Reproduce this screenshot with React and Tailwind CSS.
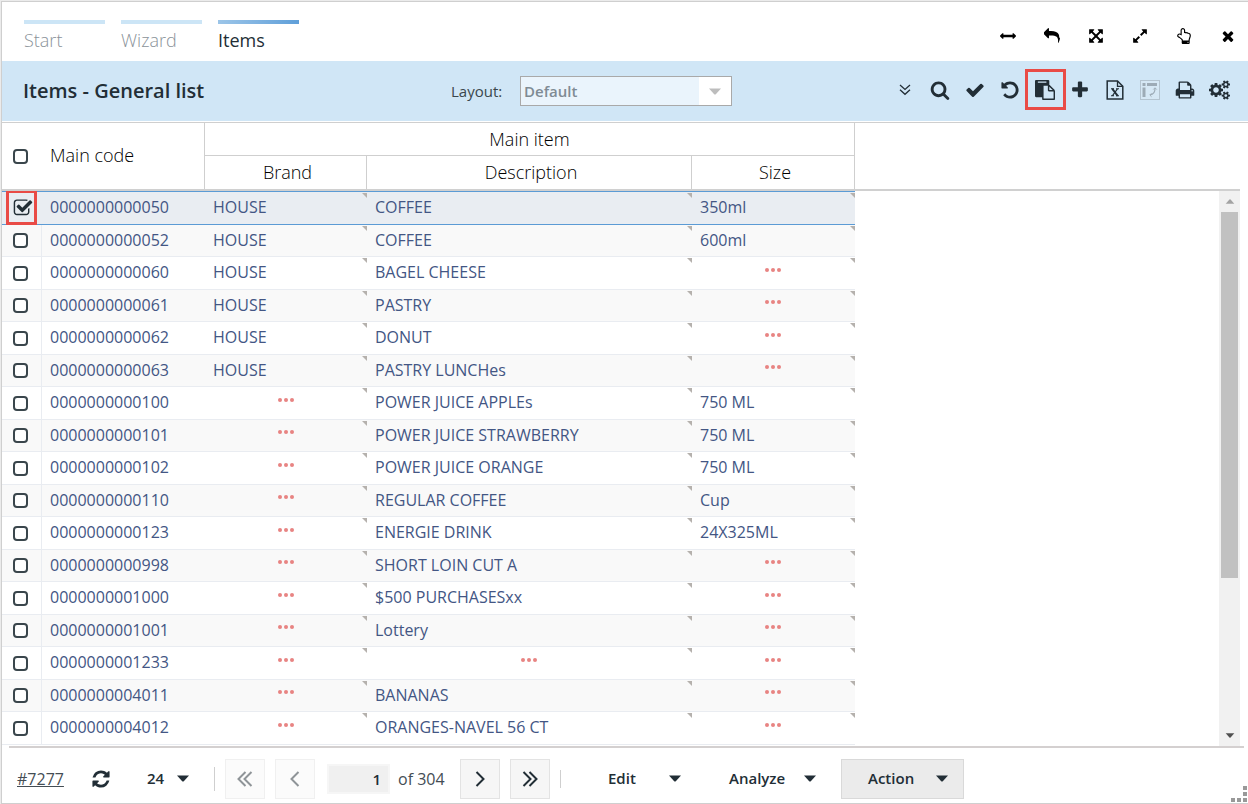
import { useState } from "react";

const PATHS = {
  width:
    "M1792 896q0 26-19 45l-256 256q-19 19-45 19t-45-19-19-45v-128h-1024v128q0 26-19 45t-45 19-45-19l-256-256q-19-19-19-45t19-45l256-256q19-19 45-19t45 19 19 45v128h1024v-128q0-26 19-45t45-19 45 19l256 256q19 19 19 45z",
  reply:
    "M1792 1120q0 166-127 451-3 7-10.5 24t-13.5 30-13 22q-12 17-28 17-15 0-23.5-10t-8.5-25q0-9 2.5-26.5t2.5-23.5q5-68 5-123 0-112-19.5-200.5t-54-153.5-89.5-112-118-77.5-147-46-172.5-22.5-197.5-6h-224v256q0 26-19 45t-45 19-45-19l-512-512q-19-19-19-45t19-45l512-512q19-19 45-19t45 19 19 45v256h224q713 0 875 403 53 134 53 333z",
  arrows:
    "M1411 541l-355 355 355 355 144-144q29-31 70-14 39 17 39 59v448q0 26-19 45t-45 19h-448q-42 0-59-40-17-39 14-69l144-144-355-355-355 355 144 144q31 30 14 69-17 40-59 40h-448q-26 0-45-19t-19-45v-448q0-42 40-59 39-17 69 14l144 144 355-355-355-355-144 144q-19 19-45 19-12 0-24-5-40-17-40-59v-448q0-26 19-45t45-19h448q42 0 59 40 17 39-14 69l-144 144 355 355 355-355-144-144q-31-30-14-69 17-40 59-40h448q26 0 45 19t19 45v448q0 42-39 59-13 5-25 5-26 0-45-19z",
  expand:
    "M883 1056q0 13-10 23l-332 332 144 144q19 19 19 45t-19 45-45 19h-448q-26 0-45-19t-19-45v-448q0-26 19-45t45-19 45 19l144 144 332-332q10-10 23-10t23 10l114 114q10 10 10 23zm781-864v448q0 26-19 45t-45 19-45-19l-144-144-332 332q-10 10-23 10t-23-10l-114-114q-10-10-10-23t10-23l332-332-144-144q-19-19-19-45t19-45 45-19h448q26 0 45 19t19 45z",
  hand:
    "M1408 1600q0-26-19-45t-45-19-45 19-19 45 19 45 45 19 45-19 19-45zm128-764q0-189-167-189-26 0-56 5-16-30-52.5-47.5t-73.5-17.5-69 18q-50-53-119-53-25 0-55.5 10t-47.5 25v-331q0-52-38-90t-90-38q-51 0-89.5 39t-38.5 89v576q-20 0-48.5-15t-55-33-68-33-84.5-15q-67 0-97.5 44.5t-30.5 115.5q0 24 139 90 44 24 65 37 64 40 145 112 81 71 106 101 57 69 57 140v32h640v-32q0-72 32-167t64-193.5 32-179.5zm128-5q0 133-69 322-59 164-59 223v288q0 53-37.5 90.5t-90.5 37.5h-640q-53 0-90.5-37.5t-37.5-90.5v-288q0-10-4.5-21.5t-14-23.5-18-22.5-22.5-24-21.5-20.5-21.5-19-17-14q-74-65-129-100-21-13-62-33t-72-37-63-40.5-49.5-55-17.5-69.5q0-125 67-206.5t189-81.5q68 0 128 22v-374q0-104 77-180t179-76q105 0 181 75.5t76 180.5v169q62 4 119 37 21-3 43-3 101 0 178 60 139-1 219.5 85t80.5 227z",
  close:
    "M1490 1322q0 40-28 68l-136 136q-28 28-68 28t-68-28l-294-294-294 294q-28 28-68 28t-68-28l-136-136q-28-28-28-68t28-68l294-294-294-294q-28-28-28-68t28-68l136-136q28-28 68-28t68 28l294 294 294-294q28-28 68-28t68 28l136 136q28 28 28 68t-28 68l-294 294 294 294q28 28 28 68z",
  search:
    "M1216 832q0-185-131.5-316.5t-316.5-131.5-316.5 131.5-131.5 316.5 131.5 316.5 316.5 131.5 316.5-131.5 131.5-316.5zm512 832q0 52-38 90t-90 38q-54 0-90-38l-343-342q-179 124-399 124-143 0-273.5-55.5t-225-150-150-225-55.5-273.5 55.5-273.5 150-225 225-150 273.5-55.5 273.5 55.5 225 150 150 225 55.5 273.5q0 220-124 399l343 343q37 37 37 90z",
  check:
    "M1671 566q0 40-28 68l-724 724-136 136q-28 28-68 28t-68-28l-136-136-362-362q-28-28-28-68t28-68l136-136q28-28 68-28t68 28l294 295 656-657q28-28 68-28t68 28l136 136q28 28 28 68z",
  undo:
    "M1664 896q0 156-61 298t-164 245-245 164-298 61q-172 0-327-72.5t-264-204.5q-7-10-6.5-22.5t8.5-20.5l137-138q10-9 25-9 16 2 23 12 73 95 179 147t225 52q104 0 198.5-40.5t163.5-109.5 109.5-163.5 40.5-198.5-40.5-198.5-109.5-163.5-163.5-109.5-198.5-40.5q-98 0-188 35.5t-160 101.5l137 138q31 30 14 69-17 40-59 40h-448q-26 0-45-19t-19-45v-448q0-42 40-59 39-17 69 14l130 129q107-101 244.5-156.5t284.5-55.5q156 0 298 61t245 164 164 245 61 298z",
  paste:
    "M768 1664h896v-640h-416q-40 0-68-28t-28-68v-416h-384v1152zm256-1440v-64q0-13-9.5-22.5t-22.5-9.5h-704q-13 0-22.5 9.5t-9.5 22.5v64q0 13 9.5 22.5t22.5 9.5h704q13 0 22.5-9.5t9.5-22.5zm256 672h299l-299-299v299zm512 128v672q0 40-28 68t-68 28h-960q-40 0-68-28t-28-68v-160h-544q-40 0-68-28t-28-68v-1344q0-40 28-68t68-28h1088q40 0 68 28t28 68v328q21 13 36 28l408 408q28 28 48 76t20 88z",
  plus:
    "M1600 736v192q0 40-28 68t-68 28h-416v416q0 40-28 68t-68 28h-192q-40 0-68-28t-28-68v-416h-416q-40 0-68-28t-28-68v-192q0-40 28-68t68-28h416v-416q0-40 28-68t68-28h192q40 0 68 28t28 68v416h416q40 0 68 28t28 68z",
  print:
    "M448 1536h896v-256h-896v256zm0-640h896v-384h-160q-40 0-68-28t-28-68v-160h-640v640zm1152 64q0-26-19-45t-45-19-45 19-19 45 19 45 45 19 45-19 19-45zm128 0v416q0 13-9.5 22.5t-22.5 9.5h-224v160q0 40-28 68t-68 28h-960q-40 0-68-28t-28-68v-160h-224q-13 0-22.5-9.5t-9.5-22.5v-416q0-79 56.5-135.5t135.5-56.5h64v-544q0-40 28-68t68-28h672q40 0 88 20t76 48l152 152q28 28 48 76t20 88v256h64q79 0 135.5 56.5t56.5 135.5z",
  refresh:
    "M1639 1056q0 5-1 7-64 268-268 434.5t-478 166.5q-146 0-282.5-55t-243.5-157l-129 129q-19 19-45 19t-45-19-19-45v-448q0-26 19-45t45-19h448q26 0 45 19t19 45-19 45l-137 137q71 66 161 102t187 36q134 0 250-65t186-179q11-17 53-117 8-23 30-23h192q13 0 22.5 9.5t9.5 22.5zm25-800v448q0 26-19 45t-45 19h-448q-26 0-45-19t-19-45 19-45l138-138q-148-137-349-137-134 0-250 65t-186 179q-11 17-53 117-8 23-30 23h-199q-13 0-22.5-9.5t-9.5-22.5v-7q65-268 270-434.5t480-166.5q146 0 284 55.5t245 156.5l130-129q19-19 45-19t45 19 19 45z",
  checkedBox:
    "M1472 930v318q0 119-84.5 203.5t-203.5 84.5h-832q-119 0-203.5-84.5t-84.5-203.5v-832q0-119 84.5-203.5t203.5-84.5h832q63 0 117 25 15 7 18 23 3 17-9 29l-49 49q-10 10-23 10-3 0-9-2-23-6-45-6h-832q-66 0-113 47t-47 113v832q0 66 47 113t113 47h832q66 0 113-47t47-113v-254q0-13 9-22l64-64q10-10 23-10 6 0 12 3 20 8 20 29zm231-489l-814 814q-24 24-57 24t-57-24l-430-430q-24-24-24-57t24-57l110-110q24-24 57-24t57 24l263 263 647-647q24-24 57-24t57 24l110 110q24 24 24 57t-24 57z",
};

const COGS =
  "M896 896q0-106-75-181t-181-75-181 75-75 181 75 181 181 75 181-75 75-181zm768 512q0-52-38-90t-90-38-90 38-38 90q0 53 37.5 90.5t90.5 37.5 90.5-37.5 37.5-90.5zm0-1024q0-52-38-90t-90-38-90 38-38 90q0 53 37.5 90.5t90.5 37.5 90.5-37.5 37.5-90.5zm-384 421v185q0 10-7 19.5t-16 10.5l-155 24q-11 35-32 76 34 48 90 115 7 11 7 20 0 12-7 19-23 30-82.5 89.5t-78.5 59.5q-11 0-21-7l-115-90q-37 19-77 31-11 108-23 155-7 24-30 24h-186q-11 0-20-7.5t-10-17.5l-23-153q-34-10-75-31l-118 89q-7 7-20 7-11 0-21-8-144-133-144-160 0-9 7-19 10-14 41-53t47-61q-23-44-35-82l-152-24q-10-1-17-9.5t-7-19.5v-185q0-10 7-19.5t16-10.5l155-24q11-35 32-76-34-48-90-115-7-11-7-20 0-12 7-20 22-30 82-89t79-59q11 0 21 7l115 90q34-18 77-32 11-108 23-154 7-24 30-24h186q11 0 20 7.5t10 17.5l23 153q34 10 75 31l118-89q8-7 20-7 11 0 21 8 144 133 144 160 0 8-7 19-12 16-42 54t-45 60q23 48 34 82l152 23q10 2 17 10.5t7 19.5zm640 533v140q0 16-149 31-12 27-30 52 51 113 51 138 0 4-4 7-122 71-124 71-8 0-46-47t-52-68q-20 2-30 2t-30-2q-14 21-52 68t-46 47q-2 0-124-71-4-3-4-7 0-25 51-138-18-25-30-52-149-15-149-31v-140q0-16 149-31 13-29 30-52-51-113-51-138 0-4 4-7 4-2 35-20t59-34 30-16q8 0 46 46.5t52 67.5q20-2 30-2t30 2q51-71 92-112l6-2q4 0 124 70 4 3 4 7 0 25-51 138 17 23 30 52 149 15 149 31zm0-1024v140q0 16-149 31-12 27-30 52 51 113 51 138 0 4-4 7-122 71-124 71-8 0-46-47t-52-68q-20 2-30 2t-30-2q-14 21-52 68t-46 47q-2 0-124-71-4-3-4-7 0-25 51-138-18-25-30-52-149-15-149-31v-140q0-16 149-31 13-29 30-52-51-113-51-138 0-4 4-7 4-2 35-20t59-34 30-16q8 0 46 46.5t52 67.5q20-2 30-2t30 2q51-71 92-112l6-2q4 0 124 70 4 3 4 7 0 25-51 138 17 23 30 52 149 15 149 31z";

function Icon({ name, className }) {
  return (
    <svg viewBox="0 0 1792 1792" fill="currentColor" className={className} aria-hidden="true">
      <path d={PATHS[name]} />
    </svg>
  );
}

function CogsIcon() {
  return (
    <svg viewBox="0 0 1920 1792" fill="currentColor" className="h-5 w-[21px]" aria-hidden="true">
      <path d={COGS} />
    </svg>
  );
}

function Caret({ className }) {
  return (
    <svg viewBox="0 0 12 7" className={className} fill="currentColor" aria-hidden="true">
      <path d="M0 .5h12L6.800 6.200q-.8.8-1.600 0z" />
    </svg>
  );
}

function Chevrons({ double, className }) {
  return (
    <svg viewBox="0 0 18 18" className={className} fill="none" stroke="currentColor" strokeWidth="2" aria-hidden="true">
      {double ? <path d="M2.500 2l7 7-7 7M8.500 2l7 7-7 7" /> : <path d="M5.500 2l7 7-7 7" />}
    </svg>
  );
}

function CollapseIcon() {
  return (
    <svg viewBox="0 0 12 12" className="h-3 w-3" fill="none" stroke="currentColor" strokeWidth="1.300" aria-hidden="true">
      <path d="M1 1l5 4.500L11 1M1 5.800l5 4.500 5-4.500" />
    </svg>
  );
}

function ExcelIcon() {
  return (
    <svg viewBox="0 0 18 20" className="h-5 w-[18px]" fill="none" stroke="currentColor" aria-hidden="true">
      <path d="M1.200 1h10.300l5.300 5.300V19H1.200z" strokeWidth="1.500" />
      <path d="M11.500 1v5.300h5.300" strokeWidth="1.300" />
      <path d="M6.300 8.800l5.400 7" strokeWidth="1.900" />
      <path d="M11.500 8.800l-5.200 7M5 8.800h3M10 8.800h3M5 15.800h3M10 15.800h3" strokeWidth="1.100" />
    </svg>
  );
}

function PivotIcon() {
  return (
    <svg viewBox="0 0 20 20" className="h-5 w-5" aria-hidden="true">
      <rect x=".5" y=".5" width="19" height="19" fill="#d6e8f5" stroke="#b4c4d0" />
      <path fill="#9dabb6" d="M2.500 3h3v3h-3zM7 3h10v3H7zM2.500 7.500h3V17h-3z" />
      <path d="M15 8.500c0 4-1.500 6-5 6.500" fill="none" stroke="#9dabb6" strokeWidth="1.200" />
      <path d="M13.300 9.500L15 7.800l1.700 1.700M11.500 13.300L9.800 15l1.700 1.700" fill="none" stroke="#9dabb6" />
    </svg>
  );
}

const EMPTY = null;
const ROWS = [
  ["0000000000050", "HOUSE", "COFFEE", "350ml"],
  ["0000000000052", "HOUSE", "COFFEE", "600ml"],
  ["0000000000060", "HOUSE", "BAGEL CHEESE", EMPTY],
  ["0000000000061", "HOUSE", "PASTRY", EMPTY],
  ["0000000000062", "HOUSE", "DONUT", EMPTY],
  ["0000000000063", "HOUSE", "PASTRY LUNCHes", EMPTY],
  ["0000000000100", EMPTY, "POWER JUICE APPLEs", "750 ML"],
  ["0000000000101", EMPTY, "POWER JUICE STRAWBERRY", "750 ML"],
  ["0000000000102", EMPTY, "POWER JUICE ORANGE", "750 ML"],
  ["0000000000110", EMPTY, "REGULAR COFFEE", "Cup"],
  ["0000000000123", EMPTY, "ENERGIE DRINK", "24X325ML"],
  ["0000000000998", EMPTY, "SHORT LOIN CUT A", EMPTY],
  ["0000000001000", EMPTY, "$500 PURCHASESxx", EMPTY],
  ["0000000001001", EMPTY, "Lottery", EMPTY],
  ["0000000001233", EMPTY, EMPTY, EMPTY],
  ["0000000004011", EMPTY, "BANANAS", EMPTY],
  ["0000000004012", EMPTY, "ORANGES-NAVEL 56 CT", EMPTY],
];

function Tick({ label, checked, onChange }) {
  return (
    <label className="ml-[11px] grid h-[18px] w-[18px] cursor-pointer items-center">
      <input
        type="checkbox"
        aria-label={label}
        checked={checked}
        onChange={onChange}
        className="peer col-start-1 row-start-1 h-[15px] w-[15px] appearance-none rounded-[4px] border-2 border-[#3a464c] bg-white checked:border-transparent checked:bg-transparent"
      />
      <Icon
        name="checkedBox"
        className="pointer-events-none invisible col-start-1 row-start-1 h-5 w-5 text-[#222e36] peer-checked:visible"
      />
    </label>
  );
}

function Cell({ value }) {
  return (
    <td className="relative p-0 pb-[2px] pl-2">
      {value === EMPTY ? (
        <span className="flex justify-center gap-[2px] pr-[9px] pb-[5px]">
          <i className="h-1 w-1 rounded-full bg-[#e88482]" />
          <i className="h-1 w-1 rounded-full bg-[#e88482]" />
          <i className="h-1 w-1 rounded-full bg-[#e88482]" />
        </span>
      ) : (
        value
      )}
      <svg viewBox="0 0 5 5" className="absolute top-px right-0 h-[5px] w-[5px]" aria-hidden="true">
        <path d="M0 0h5v5z" fill="#b5b1ad" />
      </svg>
    </td>
  );
}

function Columns() {
  return (
    <colgroup>
      <col className="w-10" />
      <col className="w-[163px]" />
      <col className="w-[162px]" />
      <col className="w-[325px]" />
      <col className="w-[163px]" />
    </colgroup>
  );
}

function Tab({ title, active }) {
  return (
    <a
      href="#"
      aria-current={active ? "page" : undefined}
      className={
        active
          ? "flex w-[81px] flex-col text-[18px] leading-8 font-medium text-[#222e36]"
          : "flex w-[81px] flex-col text-[18px] leading-8 font-light text-[#8a9299]"
      }
    >
      <span className={active ? "h-1 bg-linear-to-r from-[#9cc5e8] to-[#5f9fd9]" : "h-1 bg-[#cce5f6]"} />
      {title}
    </a>
  );
}

function WindowButton({ label, icon }) {
  return (
    <button type="button" aria-label={label} className="flex h-7 w-7 items-center justify-center text-black">
      <Icon name={icon} className="h-4 w-4" />
    </button>
  );
}

function ToolButton({ label, disabled, children }) {
  return (
    <button
      type="button"
      aria-label={label}
      disabled={disabled}
      className="relative flex h-10 w-[35px] items-center justify-center text-[#222e36]"
    >
      {children}
    </button>
  );
}

function PageButton({ label, disabled, children }) {
  return (
    <button
      type="button"
      aria-label={label}
      disabled={disabled}
      className="flex h-10 w-10 items-center justify-center border border-[#e3e3e3] bg-[#f6f6f6] text-[#222e36] disabled:border-[#f0f0f0] disabled:bg-[#fbfbfb] disabled:text-[#8f9498]"
    >
      {children}
    </button>
  );
}

export default function App() {
  const [picked, setPicked] = useState({ "0000000000050": true });
  const [page, setPage] = useState("1");
  const toggle = (code) => setPicked((p) => ({ ...p, [code]: !p[code] }));
  const all = ROWS.every((r) => picked[r[0]]);
  const toggleAll = () => setPicked(all ? {} : Object.fromEntries(ROWS.map((r) => [r[0], true])));

  return (
    <div className="h-screen bg-[#ebebeb] pt-px pl-px font-['Open_Sans',sans-serif]">
      <main className="flex h-full flex-col border-t border-b border-l border-[#cfcfcf] bg-white">
        <header className="flex h-[59px] shrink-0 justify-between pr-[6px] pl-[22px]">
          <nav className="flex gap-4 pt-[18px]">
            <Tab title="Start" />
            <Tab title="Wizard" />
            <Tab title="Items" active />
          </nav>
          <div className="flex gap-4 pt-5">
            <WindowButton label="Fit width" icon="width" />
            <WindowButton label="Back" icon="reply" />
            <WindowButton label="Full screen" icon="arrows" />
            <WindowButton label="Expand" icon="expand" />
            <WindowButton label="Pin" icon="hand" />
            <WindowButton label="Close" icon="close" />
          </div>
        </header>

        <section className="flex h-[60px] shrink-0 items-center bg-[#d0e6f6] pr-[11px] pl-[21px]">
          <h1 className="w-[428px] text-[20px] font-semibold text-[#222e36]">Items - General list</h1>
          <label htmlFor="layout" className="w-[69px] text-[15px] text-[#3a464c]">Layout:</label>
          <div className="grid h-[30px] w-[212px] grid-cols-[1fr_32px] border border-[#a9a9a9] bg-[#eaf4fc]">
            <select
              id="layout"
              className="col-span-2 col-start-1 row-start-1 appearance-none bg-transparent pl-[3px] text-[15px] font-semibold text-[#7f8b94]"
            >
              <option>Default</option>
            </select>
            <span className="pointer-events-none col-start-2 row-start-1 flex items-center justify-center bg-white text-[#bdbdbd]">
              <Caret className="h-[7px] w-3" />
            </span>
          </div>
          <div className="ml-auto flex pb-[2px]">
            <ToolButton label="Collapse"><CollapseIcon /></ToolButton>
            <ToolButton label="Search"><Icon name="search" className="h-5 w-5" /></ToolButton>
            <ToolButton label="Select"><Icon name="check" className="h-5 w-5" /></ToolButton>
            <ToolButton label="Undo"><Icon name="undo" className="h-5 w-5" /></ToolButton>
            <ToolButton label="Paste">
              <Icon name="paste" className="h-5 w-5" />
              <span className="absolute -top-px -right-[4px] -left-[2px] h-[41px] border-3 border-[#e94b46]" />
            </ToolButton>
            <ToolButton label="Add"><Icon name="plus" className="h-5 w-5" /></ToolButton>
            <ToolButton label="Export to Excel"><ExcelIcon /></ToolButton>
            <ToolButton label="Pivot" disabled><PivotIcon /></ToolButton>
            <ToolButton label="Print"><Icon name="print" className="h-5 w-5" /></ToolButton>
            <ToolButton label="Settings"><CogsIcon /></ToolButton>
          </div>
        </section>

        <div className="mt-px shrink-0 border-t border-[#cfcfcf]">
          <div className="mr-2 border-b-2 border-[#d0d0d0]">
            <table className="table-fixed border-separate border-spacing-0 text-[18px] leading-6 text-black">
              <Columns />
              <thead>
                <tr className="h-[33px]">
                  <th rowSpan={2} className="p-0 pb-[2px]"><Tick label="Select all" checked={all} onChange={toggleAll} /></th>
                  <th rowSpan={2} className="border-r border-[#cfcfcf] p-0 pb-[2px] pl-2 text-left font-light">Main code</th>
                  <th colSpan={3} className="border-r border-b border-[#cfcfcf] p-0 font-light">Main item</th>
                </tr>
                <tr className="h-[33px]">
                  <th className="border-r border-[#cfcfcf] p-0 pb-[2px] pl-1 font-light">Brand</th>
                  <th className="border-r border-[#cfcfcf] p-0 pb-[2px] pl-1 font-light">Description</th>
                  <th className="border-r border-[#cfcfcf] p-0 pb-[2px] pl-1 font-light">Size</th>
                </tr>
              </thead>
            </table>
          </div>
        </div>

        <div className="mr-2 flex min-h-0 flex-1 justify-between">
          <div className="overflow-hidden">
            <table className="table-fixed border-separate border-spacing-0 text-[16px] leading-6 font-normal text-[#435684]">
              <Columns />
              <tbody>
                {ROWS.map((row, i) => {
                  const [code, ...rest] = row;
                  return (
                    <tr
                      key={code}
                      className={
                        i === 0
                          ? "h-[34px] bg-[#e9edf2] [&>td]:border-y [&>td]:border-[#5b9bd5]"
                          : "odd:h-[33px] even:h-8 even:bg-[#f9f9f9] [&>td]:border-b [&>td]:border-b-[#e9ecf1]"
                      }
                    >
                      <td className={i === 0 ? "relative p-0 pb-[2px]" : "border-r border-r-[#e9ecf1] p-0 pb-[2px]"}>
                        <Tick label={"Select " + code} checked={!!picked[code]} onChange={() => toggle(code)} />
                        {i === 0 && (
                          <span className="pointer-events-none absolute -top-[2px] left-1 h-[35px] w-[31px] border-3 border-[#e94b46]" />
                        )}
                      </td>
                      <td className="p-0 pb-[2px] pl-2">{code}</td>
                      {rest.map((value, k) => (
                        <Cell key={k} value={value} />
                      ))}
                    </tr>
                  );
                })}
              </tbody>
            </table>
          </div>
          <div className="flex w-[21px] flex-col items-center bg-[#f1f1f1]" aria-hidden="true">
            <span className="flex h-[21px] shrink-0 items-center">
              <Caret className="h-[5px] w-[10px] rotate-180 text-[#a3a3a3]" />
            </span>
            <span className="h-[66%] w-[17px] bg-[#c1c1c1]" />
            <span className="mt-auto flex h-[21px] shrink-0 items-center">
              <Caret className="h-[5px] w-[10px] text-[#505050]" />
            </span>
          </div>
        </div>

        <footer className="shrink-0">
          <div className="mr-1 ml-[7px] h-[2px] bg-[#d4d0d0]" />
          <div className="flex h-[55px] items-center pt-[6px] text-[15px] text-[#222e36]">
            <div className="flex w-[213px] shrink-0 items-center border-r border-[#cfcfcf] pl-[15px]">
              <a href="#" className="w-[74px] text-[16px] text-[#444d54] underline">#7277</a>
              <button type="button" aria-label="Refresh" className="w-[56px]">
                <Icon name="refresh" className="h-5 w-5" />
              </button>
              <label className="grid w-[42px] items-center">
                <select aria-label="Rows per page" className="col-start-1 row-start-1 w-full appearance-none font-semibold">
                  <option>24</option>
                </select>
                <Caret className="pointer-events-none col-start-1 row-start-1 h-[7px] w-3 justify-self-end" />
              </label>
            </div>
            <div className="ml-[10px] flex shrink-0 items-center gap-[10px]">
              <PageButton label="First page" disabled><Chevrons double className="h-[18px] w-[18px] rotate-180" /></PageButton>
              <PageButton label="Previous page" disabled><Chevrons className="h-[18px] w-[18px] rotate-180" /></PageButton>
            </div>
            <input
              aria-label="Page"
              value={page}
              onChange={(e) => setPage(e.target.value)}
              className="ml-3 h-[30px] w-[63px] shrink-0 border-2 border-[#f6f6f6] bg-[#f0f0f0] pr-[7px] text-right font-semibold"
            />
            <span className="ml-2 w-[62px] shrink-0 text-[16px] text-[#444d54]">of 304</span>
            <div className="flex shrink-0 items-center gap-[10px]">
              <PageButton label="Next page"><Chevrons className="h-[18px] w-[18px]" /></PageButton>
              <PageButton label="Last page"><Chevrons double className="h-[18px] w-[18px]" /></PageButton>
            </div>
            <span className="ml-[10px] h-[18px] w-px bg-[#cfcfcf]" />
            <button type="button" className="ml-5 flex h-10 w-[100px] items-center justify-between pl-[27px] font-semibold">
              Edit <Caret className="h-[7px] w-3" />
            </button>
            <button type="button" className="ml-5 flex h-10 w-[115px] items-center justify-between pl-[28px] font-semibold">
              Analyze <Caret className="h-[7px] w-3" />
            </button>
            <button
              type="button"
              className="ml-[25px] flex h-10 w-[123px] items-center justify-between border border-[#d9d9d9] bg-[#ebebeb] pr-[15px] pl-[26px] font-semibold"
            >
              Action <Caret className="h-[7px] w-3" />
            </button>
            <svg viewBox="0 0 18 18" className="ml-auto h-[18px] w-[18px] self-end text-[#999]" fill="currentColor" aria-hidden="true">
              <path d="M13 1h4v4h-4zM13 7h4v4h-4zM1 13h4v4H1zM7 13h4v4H7zM13 13h4v4h-4z" />
            </svg>
          </div>
        </footer>
      </main>
    </div>
  );
}
